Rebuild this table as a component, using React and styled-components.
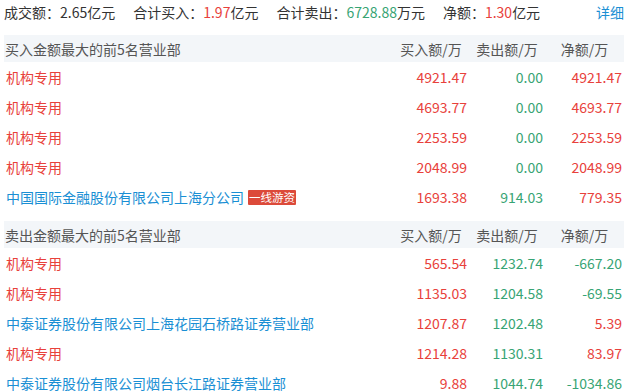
import React from "react";
import styled, { createGlobalStyle } from "styled-components";

const GlobalStyle = createGlobalStyle`
  html, body {
    margin: 0;
    padding: 0;
    background: #fff;
  }
  body {
    font-family: "Microsoft YaHei", "Noto Sans CJK SC", "Noto Sans", sans-serif;
    font-size: 14px;
    color: #333;
  }
`;

const RED = "#e8413b";
const GREEN = "#37a474";
const BLUE = "#1a8fd4";

const Main = styled.div`
  width: 620px;
  padding: 0 6px 0 4px;
`;

const Summary = styled.div`
  display: flex;
  align-items: center;
  height: 24px;
  line-height: 24px;
  margin-bottom: 11px;
`;

const SummaryItem = styled.span`
  margin-right: 18px;
  white-space: nowrap;
`;

const Num = styled.span`
  color: ${(p) => p.$color};
`;

const Detail = styled.a`
  margin-left: auto;
  color: ${BLUE};
  text-decoration: none;
  cursor: pointer;
`;

const Section = styled.div`
  & + & {
    margin-top: 9px;
  }
`;

const Grid = styled.div`
  display: grid;
  grid-template-columns: 1fr 76px 76px 79px;
  align-items: center;
`;

const HeadRow = styled(Grid)`
  height: 27px;
  background: #f3f6f9;
  color: #555;
`;

const HeadTitle = styled.div`
  padding-left: 1px;
  white-space: nowrap;
`;

const HeadCell = styled.div`
  text-align: center;
  white-space: nowrap;
`;

const Row = styled(Grid)`
  height: 30px;
`;

const Name = styled.div`
  padding-left: 2px;
  display: flex;
  align-items: center;
  white-space: nowrap;
  color: ${(p) => (p.$org ? RED : BLUE)};
`;

const Badge = styled.span`
  display: inline-block;
  margin-left: 4px;
  padding: 0 1px;
  height: 15px;
  line-height: 15px;
  font-size: 11.5px;
  color: #fff;
  background: #dc4a3a;
  border-radius: 1px;
`;

const Cell = styled.div`
  text-align: right;
  padding-right: 2px;
  color: ${(p) => p.$color};
`;

const numColor = (v) => (v.startsWith("-") ? GREEN : RED);

const buyRows = [
  { name: "机构专用", org: true, buy: "4921.47", sell: "0.00", net: "4921.47" },
  { name: "机构专用", org: true, buy: "4693.77", sell: "0.00", net: "4693.77" },
  { name: "机构专用", org: true, buy: "2253.59", sell: "0.00", net: "2253.59" },
  { name: "机构专用", org: true, buy: "2048.99", sell: "0.00", net: "2048.99" },
  { name: "中国国际金融股份有限公司上海分公司", tag: "一线游资", buy: "1693.38", sell: "914.03", net: "779.35" },
];

const sellRows = [
  { name: "机构专用", org: true, buy: "565.54", sell: "1232.74", net: "-667.20" },
  { name: "机构专用", org: true, buy: "1135.03", sell: "1204.58", net: "-69.55" },
  { name: "中泰证券股份有限公司上海花园石桥路证券营业部", buy: "1207.87", sell: "1202.48", net: "5.39" },
  { name: "机构专用", org: true, buy: "1214.28", sell: "1130.31", net: "83.97" },
  { name: "中泰证券股份有限公司烟台长江路证券营业部", buy: "9.88", sell: "1044.74", net: "-1034.86" },
];

const Table = ({ title, rows }) => (
  <Section>
    <HeadRow>
      <HeadTitle>{title}</HeadTitle>
      <HeadCell>买入额/万</HeadCell>
      <HeadCell>卖出额/万</HeadCell>
      <HeadCell>净额/万</HeadCell>
    </HeadRow>
    {rows.map((r, i) => (
      <Row key={i}>
        <Name $org={r.org}>
          {r.name}
          {r.tag && <Badge>{r.tag}</Badge>}
        </Name>
        <Cell $color={RED}>{r.buy}</Cell>
        <Cell $color={GREEN}>{r.sell}</Cell>
        <Cell $color={numColor(r.net)}>{r.net}</Cell>
      </Row>
    ))}
  </Section>
);

const App = () => (
  <Main>
    <GlobalStyle />
    <Summary>
      <SummaryItem>成交额：2.65亿元</SummaryItem>
      <SummaryItem>
        合计买入：<Num $color={RED}>1.97</Num>亿元
      </SummaryItem>
      <SummaryItem>
        合计卖出：<Num $color={GREEN}>6728.88</Num>万元
      </SummaryItem>
      <SummaryItem>
        净额：<Num $color={RED}>1.30</Num>亿元
      </SummaryItem>
      <Detail>详细</Detail>
    </Summary>
    <Table title="买入金额最大的前5名营业部" rows={buyRows} />
    <Table title="卖出金额最大的前5名营业部" rows={sellRows} />
  </Main>
);

export default App;
